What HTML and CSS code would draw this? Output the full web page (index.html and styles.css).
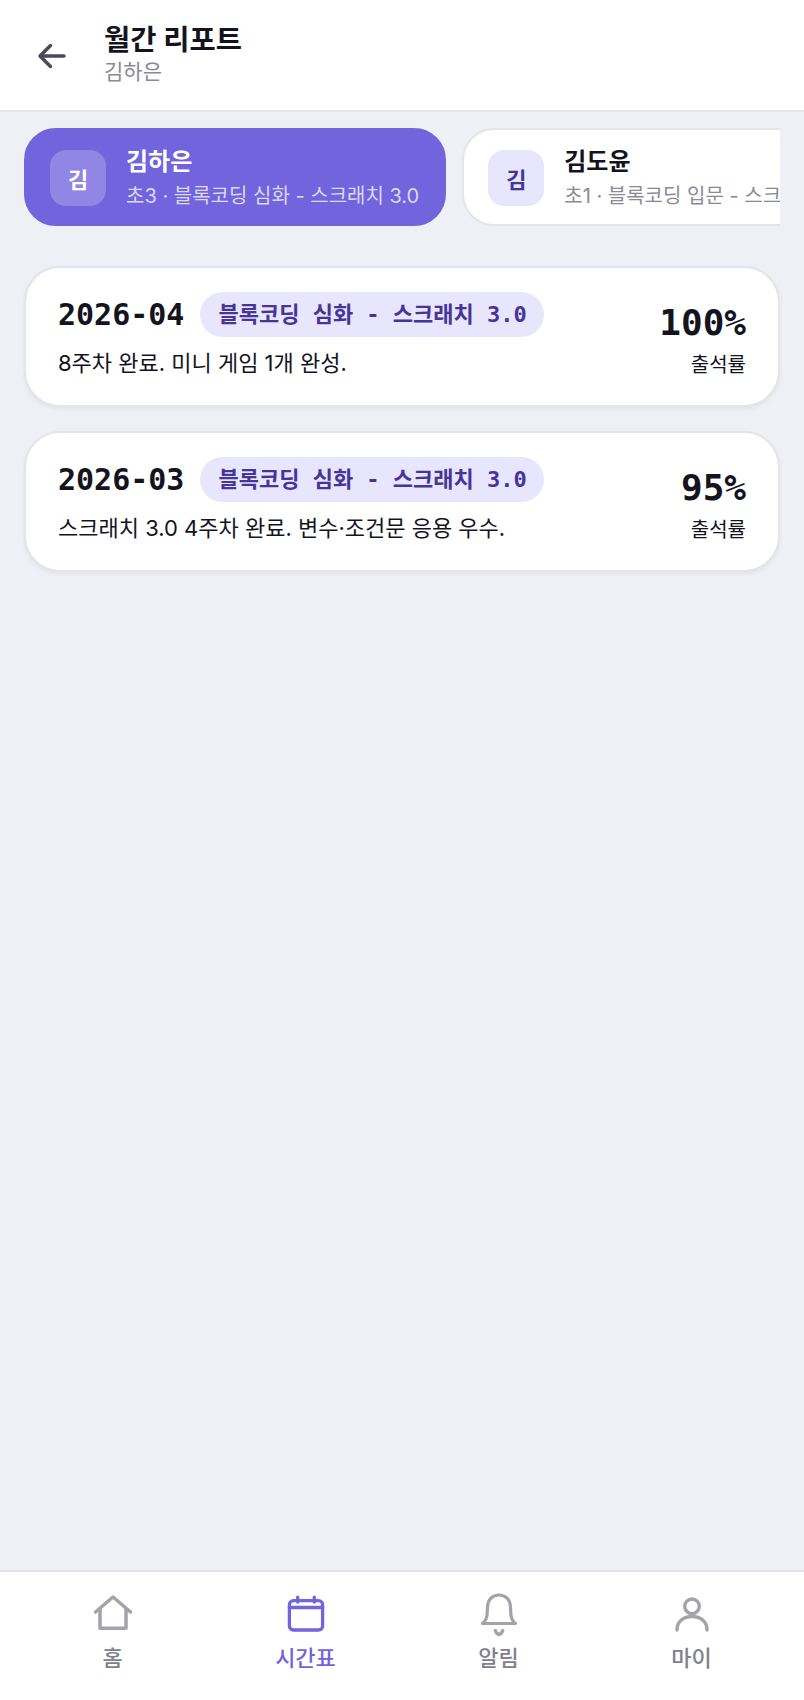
FILE: index.html
```html
<!DOCTYPE html>
<html lang="ko">
<head>
  <meta charset="UTF-8">
  <meta name="viewport" content="width=device-width, initial-scale=1.0">
  <title>월간 리포트</title>
  <link rel="stylesheet" href="styles.css">
</head>
<body>

<div class="app">
  <header class="topbar">
    <button class="back" type="button" aria-label="뒤로">
      <svg width="36" height="36" viewBox="0 0 24 24" fill="none" stroke="#4a4a5a" stroke-width="2.300" stroke-linecap="round" stroke-linejoin="round"><path d="M20 12H5"/><path d="M11 5l-7 7 7 7"/></svg>
    </button>
    <div>
      <h1>월간 리포트</h1>
      <p class="topbar-sub">김하은</p>
    </div>
  </header>

  <div class="chips">
    <div class="chip active">
      <div class="avatar">김</div>
      <div class="chip-text">
        <div class="chip-name">김하은</div>
        <div class="chip-sub">초3 · 블록코딩 심화 - 스크래치 3.0</div>
      </div>
    </div>
    <div class="chip">
      <div class="avatar">김</div>
      <div class="chip-text">
        <div class="chip-name">김도윤</div>
        <div class="chip-sub">초1 · 블록코딩 입문 - 스크래치 3.0</div>
      </div>
    </div>
  </div>

  <main class="reports">
    <div class="card">
      <div class="card-main">
        <div class="card-head">
          <span class="month">2026-04</span>
          <span class="tag">블록코딩 심화 - 스크래치 3.0</span>
        </div>
        <p class="note">8주차 완료. 미니 게임 1개 완성.</p>
      </div>
      <div class="rate">
        <div class="rate-num">100%</div>
        <div class="rate-label">출석률</div>
      </div>
    </div>
    <div class="card">
      <div class="card-main">
        <div class="card-head">
          <span class="month">2026-03</span>
          <span class="tag">블록코딩 심화 - 스크래치 3.0</span>
        </div>
        <p class="note">스크래치 3.0 4주차 완료. 변수·조건문 응용 우수.</p>
      </div>
      <div class="rate">
        <div class="rate-num">95%</div>
        <div class="rate-label">출석률</div>
      </div>
    </div>
  </main>

  <nav class="tabbar">
    <a class="tab">
      <svg width="40" height="40" viewBox="0 0 40 40" fill="none" stroke="#a3a3ab" stroke-width="3.500" stroke-linejoin="round" stroke-linecap="round"><path d="M2.500 18L20 3l17.500 15"/><path d="M7 15v19.300h26V15"/></svg>
      <span>홈</span>
    </a>
    <a class="tab current">
      <svg width="40" height="40" viewBox="0 0 40 40" fill="none" stroke="#7264dc" stroke-width="3.300" stroke-linecap="round" stroke-linejoin="round"><rect x="3.400" y="6.700" width="33.200" height="29.300" rx="4"/><path d="M3.400 13.500h33.200"/><path d="M11.700 3.200V8"/><path d="M28.300 3.200V8"/></svg>
      <span>시간표</span>
    </a>
    <a class="tab">
      <svg width="40" height="40" viewBox="0 0 40 40" fill="none" stroke="#a3a3ab" stroke-width="3.200" stroke-linecap="round" stroke-linejoin="round"><path d="M3.500 29.500c2.500-2 4.500-5 4.700-10L8.500 13C8.800 5.500 13.500 1 20 1s11.200 4.500 11.500 12l.3 6.500c.2 5 2.200 8 4.700 10z"/><path d="M16.300 36.500c.8 2.500 2 3.800 3.700 3.800s2.900-1.300 3.700-3.800" stroke-width="3.400"/></svg>
      <span>알림</span>
    </a>
    <a class="tab">
      <svg width="40" height="40" viewBox="0 0 40 40" fill="none" stroke="#a3a3ab" stroke-width="3.400" stroke-linecap="round"><circle cx="20" cy="12.300" r="7.300"/><path d="M5 36c0-8.500 6.500-13.500 15-13.500S35 27.500 35 36"/></svg>
      <span>마이</span>
    </a>
  </nav>
</div>

</body>
</html>
```

FILE: styles.css
```css
* {
  box-sizing: border-box;
}
body {
  margin: 0;
  background-color: #eff0f5;
  color: #14141f;
  font-family: Inter, "Noto Sans CJK KR", sans-serif;
}
.app {
  display: flex;
  flex-direction: column;
  height: 1700px;
}
.topbar {
  display: flex;
  align-items: center;
  gap: 34px;
  height: 112px;
  padding: 0 34px 2px;
  background-color: white;
  border-bottom: 2px solid #e4e4ea;
}
.back {
  display: flex;
  margin-top: 4px;
  padding: 0;
  border: none;
  background: none;
}
.topbar h1 {
  margin: 0;
  font-size: 28.500px;
  font-weight: 700;
  line-height: 36px;
}
.topbar-sub {
  margin: 0;
  font-size: 21px;
  line-height: 28px;
  color: #8a8a96;
}
.chips {
  display: flex;
  gap: 16px;
  margin: 16px 24px 0;
  overflow: hidden;
}
.chip {
  display: flex;
  flex-shrink: 0;
  align-items: center;
  gap: 20px;
  height: 98px;
  padding: 0 25px 0 24px;
  background-color: white;
  border: 2px solid #e4e4ea;
  border-radius: 32px;
}
.chip.active {
  background-color: #7264dc;
  border-color: #7264dc;
  color: white;
}
.avatar {
  display: flex;
  align-items: center;
  justify-content: center;
  width: 56px;
  height: 56px;
  margin-top: 2px;
  border-radius: 16px;
  background-color: #e8e6fd;
  color: #463499;
  font-size: 22px;
  font-weight: 700;
}
.chip.active .avatar {
  background-color: rgba(255, 255, 255, 0.22);
  color: white;
}
.chip-name {
  font-size: 24px;
  font-weight: 700;
  line-height: 34px;
}
.chip-sub {
  margin-top: 4px;
  font-size: 20px;
  line-height: 26px;
  color: #8a8a96;
}
.chip.active .chip-sub {
  color: rgba(255, 255, 255, 0.75);
}
.reports {
  display: flex;
  flex: 1;
  flex-direction: column;
  gap: 24px;
  padding: 40px 24px 0;
}
.card {
  display: flex;
  align-items: flex-end;
  justify-content: space-between;
  padding: 24px 32px 26px;
  background-color: white;
  border: 2px solid #e4e4ea;
  border-radius: 36px;
  box-shadow: 0 2px 4px rgba(20, 20, 31, 0.06);
}
.card-head {
  display: flex;
  align-items: center;
  gap: 16px;
}
.month {
  font-family: "DejaVu Sans Mono", "Noto Sans CJK KR", monospace;
  font-size: 30px;
  font-weight: 700;
}
.tag {
  padding: 6.500px 17px 6.500px 18px;
  border-radius: 24px;
  background-color: #e8e6fd;
  color: #463499;
  font-family: "DejaVu Sans Mono", "Noto Sans CJK KR", monospace;
  font-size: 22px;
  font-weight: 600;
  line-height: 32px;
}
.note {
  margin: 10px 0 0;
  font-size: 22px;
  line-height: 32px;
}
.rate {
  text-align: right;
}
.rate-num {
  font-family: "DejaVu Sans Mono", "Noto Sans CJK KR", monospace;
  font-size: 36px;
  font-weight: 700;
  line-height: 44px;
}
.rate-label {
  margin-top: 6px;
  font-size: 20px;
  line-height: 28px;
}
.tabbar {
  display: grid;
  grid-template-columns: repeat(4, 1fr);
  height: 130px;
  padding: 0 16px;
  background-color: white;
  border-top: 2px solid #e4e4ea;
}
.tab {
  display: flex;
  flex-direction: column;
  align-items: center;
  gap: 6px;
  padding-top: 22px;
  color: #81818d;
  font-size: 22px;
  font-weight: 500;
}
.tab svg {
  overflow: visible;
}
.tab.current {
  color: #7264dc;
}
```
